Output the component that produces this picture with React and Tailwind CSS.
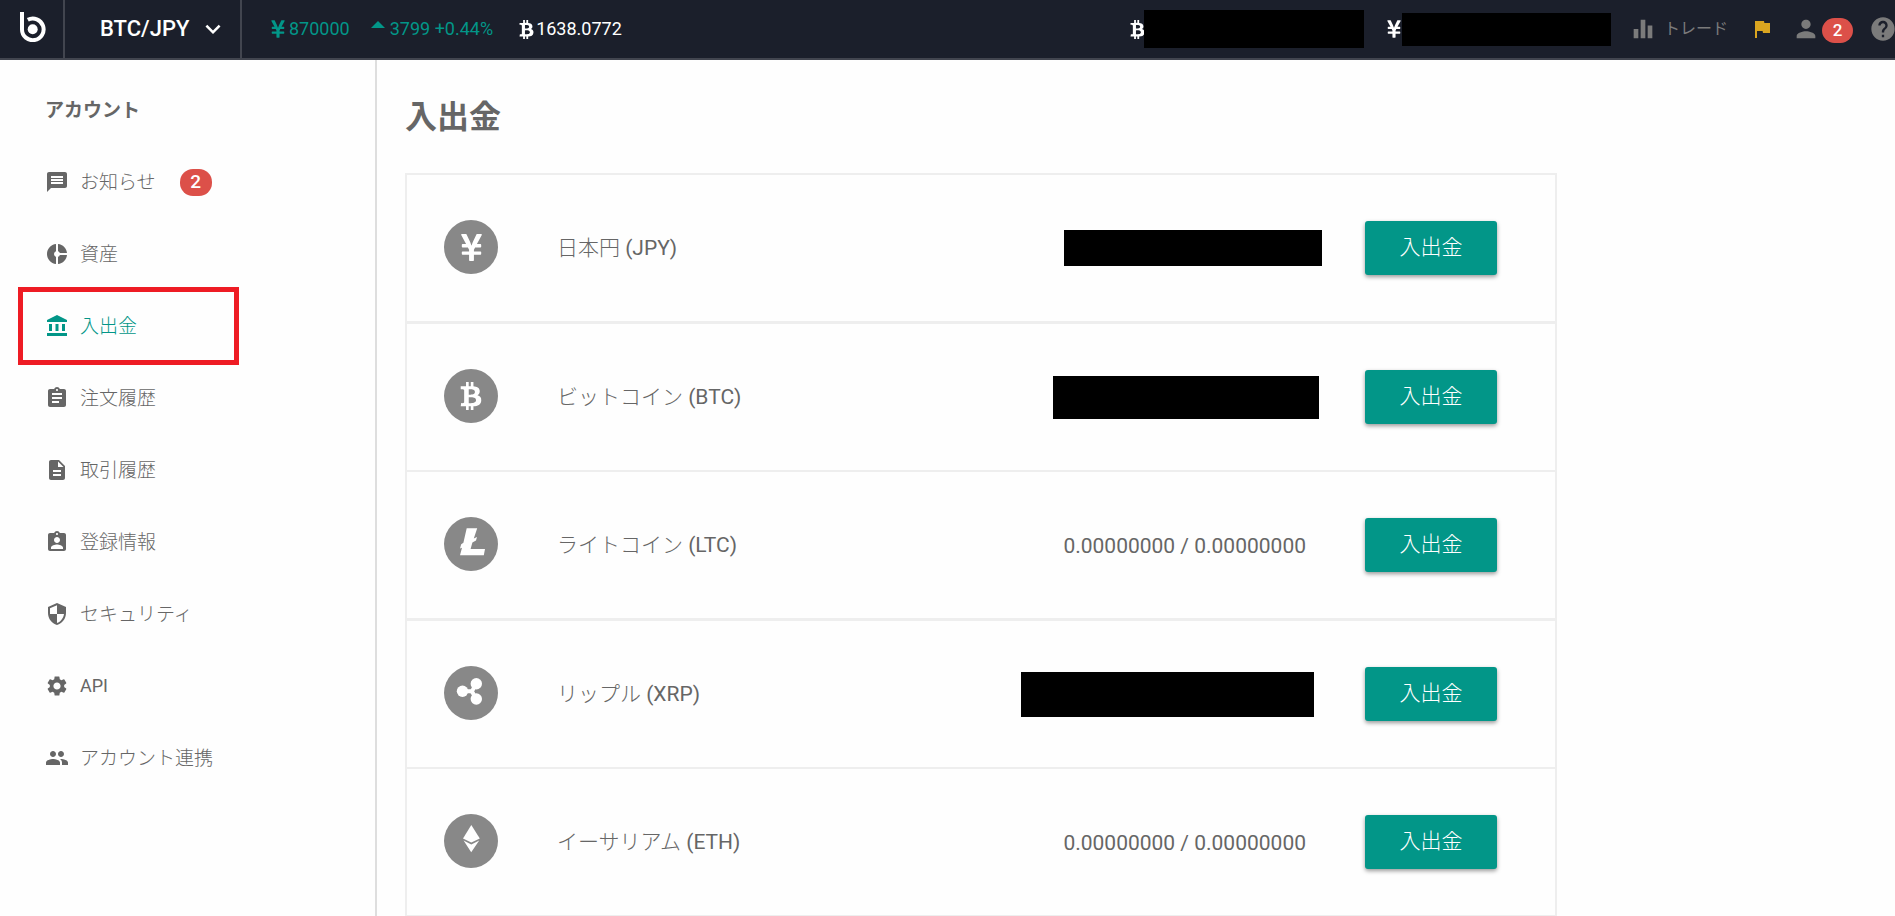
import React from "react";
import {
  MdAccountBalance,
  MdAssignment,
  MdAssignmentInd,
  MdDescription,
  MdDonutSmall,
  MdEqualizer,
  MdFlag,
  MdHelp,
  MdKeyboardArrowDown,
  MdMessage,
  MdPeople,
  MdPerson,
  MdSecurity,
  MdSettings,
} from "react-icons/md";
import { FaBtc, FaYenSign } from "react-icons/fa";

const NAV = [
  { label: "お知らせ", Icon: MdMessage, badge: 2 },
  { label: "資産", Icon: MdDonutSmall },
  { label: "入出金", Icon: MdAccountBalance, active: true },
  { label: "注文履歴", Icon: MdAssignment },
  { label: "取引履歴", Icon: MdDescription },
  { label: "登録情報", Icon: MdAssignmentInd },
  { label: "セキュリティ", Icon: MdSecurity },
  { label: "API", Icon: MdSettings },
  { label: "アカウント連携", Icon: MdPeople },
];

function LitecoinMark() {
  return (
    <svg viewBox="0 0 54 54" className="size-full" fill="currentColor" aria-hidden="true">
      <path d="M22.7 11.3H33.2L29.8 21.6L33 20L32 23.6L28.4 25.6L26.6 32H41L39.8 38.3H16L18 30.8L16 31.6L17.2 27.2L19.4 25.8Z" />
    </svg>
  );
}

function RippleMark() {
  return (
    <svg viewBox="0 0 54 54" className="size-full" fill="currentColor" aria-hidden="true">
      <circle cx="18.5" cy="25.3" r="5.7" />
      <circle cx="32.3" cy="17.8" r="5.7" />
      <circle cx="32.3" cy="33" r="5.7" />
      <path
        d="M18.5 25.3H27.4M32.3 17.8C29.5 19.5 30.5 23.5 27.4 25.3C30.5 27.5 29.5 31 32.3 33"
        fill="none"
        stroke="currentColor"
        strokeWidth="4"
      />
    </svg>
  );
}

function EthereumMark() {
  return (
    <svg viewBox="0 0 54 54" className="size-full" fill="currentColor" aria-hidden="true">
      <path d="M27.3 11L35.8 24.6L27.3 28.6L19 24.6Z" />
      <path d="M19.6 26.6L27.3 30.6L35.2 26.6L27.2 38.2Z" />
    </svg>
  );
}

const ASSETS = [
  { name: "日本円", code: "JPY", mark: <FaYenSign className="size-[31px]" />, mask: "h-9 w-[258px]" },
  { name: "ビットコイン", code: "BTC", mark: <FaBtc className="size-[28px]" />, mask: "mr-[3px] h-[43px] w-[266px]" },
  { name: "ライトコイン", code: "LTC", mark: <LitecoinMark />, amount: "0.00000000 / 0.00000000" },
  { name: "リップル", code: "XRP", mark: <RippleMark />, mask: "mr-2 h-[45px] w-[293px]" },
  { name: "イーサリアム", code: "ETH", mark: <EthereumMark />, amount: "0.00000000 / 0.00000000" },
];

function Header() {
  return (
    <header className="flex h-[60px] items-center overflow-hidden border-b-2 border-[#42454f] bg-[#1b1f2b] text-lg text-white">
      <a href="#home" aria-label="bitFlyer" className="flex h-full w-[65px] shrink-0 items-center justify-center border-r-2 border-[#42454f] pb-1 pl-0.5">
        <svg viewBox="0 0 26 30" className="h-[30px] w-[26px]" fill="none" aria-hidden="true">
          <path d="M2 0V17.4A10.8 10.8 0 1 0 7.8 7.8" stroke="currentColor" strokeWidth="4" />
          <circle cx="12.7" cy="17.2" r="5" fill="currentColor" />
        </svg>
      </a>
      <div className="relative h-full w-[177px] shrink-0 border-r-2 border-[#42454f]">
        <select aria-label="通貨ペア" className="size-full appearance-none bg-transparent pl-[35px] text-[22px] font-medium outline-none">
          <option>BTC/JPY</option>
        </select>
        <MdKeyboardArrowDown className="pointer-events-none absolute top-3.5 right-3 size-[30px]" />
      </div>

      <div className="flex shrink-0 items-center pl-[26px]">
        <FaYenSign className="size-5 text-[#029688]" />
        <span className="ml-px text-[#029688]">870000</span>
        <svg viewBox="0 0 14 7" className="mb-2.5 ml-[21px] h-[7px] w-3.5 text-[#029688]" fill="currentColor" aria-hidden="true">
          <path d="M7 0L14 7H0Z" />
        </svg>
        <span className="ml-[5px] text-[#029688]">3799 +0.44%</span>
        <FaBtc className="ml-6 size-[19px]" />
        <span>1638.0772</span>
      </div>

      <div className="-mr-0.5 ml-auto flex shrink-0 items-center text-[#7b7b7b]">
        <FaBtc className="-mr-[3px] size-[19px] text-white" />
        <span className="h-[38px] w-[220px] bg-black" />
        <FaYenSign className="-mr-[2px] ml-5 size-5 text-white" />
        <span className="h-[33px] w-[209px] bg-black" />
        <a href="#trade" className="ml-[18px] flex items-center gap-[7px] text-base">
          <MdEqualizer className="size-7" />
          トレード
        </a>
        <button type="button" aria-label="フラグ" className="ml-[22px] text-[#daa520]">
          <MdFlag className="size-6" />
        </button>
        <a href="#account" aria-label="アカウント" className="ml-[18px] flex items-center gap-0.5">
          <MdPerson className="size-7" />
          <span className="mt-0.5 flex h-[25px] w-[31px] items-center justify-center rounded-full bg-[#dc5049] text-[17px] font-medium text-white">
            2
          </span>
        </a>
        <a href="#help" aria-label="ヘルプ" className="ml-4">
          <MdHelp className="size-7" />
        </a>
      </div>
    </header>
  );
}

function Sidebar() {
  return (
    <nav aria-label="アカウント" className="w-[377px] shrink-0 border-r-2 border-[#dedede] pt-[37px] pl-[45px] text-[19px] text-[#666]">
      <h2 className="mb-[21px] leading-7 font-bold">アカウント</h2>
      <ul>
        {NAV.map(({ label, Icon, badge, active }) => (
          <li key={label} className="relative">
            <a href="#nav" className={`flex h-[72px] items-center font-light ${active ? "text-[#029688]" : ""}`}>
              <Icon className="mr-[11px] size-6" />
              <span className={label === "API" ? "text-lg font-normal" : "pt-0.5"}>{label}</span>
              {badge && (
                <span className="ml-6 flex h-[27px] w-8 items-center justify-center rounded-[13px] bg-[#dc5049] font-medium text-white">
                  {badge}
                </span>
              )}
            </a>
            {active && (
              <span className="pointer-events-none absolute -inset-y-[3px] -left-[27px] w-[221px] border-[5px] border-[#ee1c24]" />
            )}
          </li>
        ))}
      </ul>
    </nav>
  );
}

export default function App() {
  return (
    <div
      lang="ja"
      className="flex min-h-screen flex-col bg-[#fefefe] font-[Roboto,'Noto_Sans_CJK_JP',sans-serif] text-[#666]"
    >
      <Header />
      <div className="flex grow">
        <Sidebar />
        <main className="grow pr-7 pl-7">
          <h1 className="pt-[37px] pb-9 text-[32px] leading-10 font-bold">入出金</h1>
          <table className="w-full max-w-[1152px] border-separate border-spacing-0 border-2 border-b-0 border-[#eee] text-[21px]">
            <tbody>
              {ASSETS.map(({ name, code, mark, mask, amount }) => (
                <tr
                  key={name}
                  className="*:border-b-2 *:border-[#eee] *:p-0 odd:*:h-[149px] odd:*:border-b-3 even:*:h-[148px] last:*:h-[147px] last:*:border-b"
                >
                  <td className="w-[150px]">
                    <span className="mb-0.5 ml-[37px] flex size-[54px] items-center justify-center rounded-full bg-[#888] text-white">
                      {mark}
                    </span>
                  </td>
                  <td className="font-light">
                    <span className="block pt-0.5">
                      {name} <span className="font-normal">({code})</span>
                    </span>
                  </td>
                  <td>
                    {amount ? (
                      <span className="mr-4 block pt-[3px] text-right">{amount}</span>
                    ) : (
                      <span className={`ml-auto block bg-black ${mask}`} />
                    )}
                  </td>
                  <td className="w-[233px]">
                    <button
                      type="button"
                      className="ml-[43px] block h-[54px] w-[132px] rounded-[3px] bg-[#029688] font-light text-white shadow-[0_2px_4px_rgba(0,0,0,0.4)]"
                    >
                      入出金
                    </button>
                  </td>
                </tr>
              ))}
            </tbody>
          </table>
        </main>
      </div>
    </div>
  );
}
